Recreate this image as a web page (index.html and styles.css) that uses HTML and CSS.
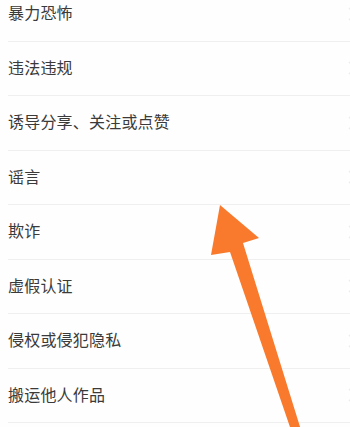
FILE: index.html
```html
<!DOCTYPE html>
<html lang="zh">
<head>
<meta charset="utf-8">
<link rel="stylesheet" href="styles.css">
</head>
<body>
<div class="list">
  <div class="row"><div class="inner"><span class="label">暴力恐怖</span><svg class="chev" viewBox="0 0 8 14"><path d="M1 1l6 6-6 6" /></svg></div></div>
  <div class="row"><div class="inner"><span class="label">违法违规</span><svg class="chev" viewBox="0 0 8 14"><path d="M1 1l6 6-6 6" /></svg></div></div>
  <div class="row"><div class="inner"><span class="label">诱导分享、关注或点赞</span><svg class="chev" viewBox="0 0 8 14"><path d="M1 1l6 6-6 6" /></svg></div></div>
  <div class="row"><div class="inner"><span class="label">谣言</span><svg class="chev" viewBox="0 0 8 14"><path d="M1 1l6 6-6 6" /></svg></div></div>
  <div class="row"><div class="inner"><span class="label">欺诈</span><svg class="chev" viewBox="0 0 8 14"><path d="M1 1l6 6-6 6" /></svg></div></div>
  <div class="row"><div class="inner"><span class="label">虚假认证</span><svg class="chev" viewBox="0 0 8 14"><path d="M1 1l6 6-6 6" /></svg></div></div>
  <div class="row"><div class="inner"><span class="label">侵权或侵犯隐私</span><svg class="chev" viewBox="0 0 8 14"><path d="M1 1l6 6-6 6" /></svg></div></div>
  <div class="row"><div class="inner"><span class="label">搬运他人作品</span><svg class="chev" viewBox="0 0 8 14"><path d="M1 1l6 6-6 6" /></svg></div></div>
</div>
<svg class="arrow" viewBox="0 0 350 427" width="350" height="427">
  <polygon points="220,205 259,238 243,243 301,430 291,430 230,252 211,255" />
</svg>
</body>
</html>
```
FILE: styles.css
```css
html, body {
  margin: 0;
  padding: 0;
  overflow: hidden;
  width: 350px;
  height: 427px;
  background: #fefefe;
}
body {
  position: relative;
  font-family: "Noto Sans CJK SC", "Noto Sans", sans-serif;
}
.list {
  margin-top: -13px;
}
.row {
  padding-left: 8px;
  height: 54.5px;
  box-sizing: border-box;
}
.inner {
  height: 100%;
  box-sizing: border-box;
  border-bottom: 1px solid #efefef;
  display: flex;
  align-items: center;
  justify-content: space-between;
  margin-right: -8px;
}
.label {
  font-size: 16px;
  line-height: 20px;
  color: #3a3a3a;
  letter-spacing: 0.2px;
  margin-top: -3px;
}
.chev {
  width: 8px;
  height: 14px;
  fill: none;
  stroke: #ececec;
  stroke-width: 1.3;
  margin-right: 2px;
}
.arrow {
  position: absolute;
  left: 0;
  top: 0;
}
.arrow polygon {
  fill: #f97a2c;
}
```
